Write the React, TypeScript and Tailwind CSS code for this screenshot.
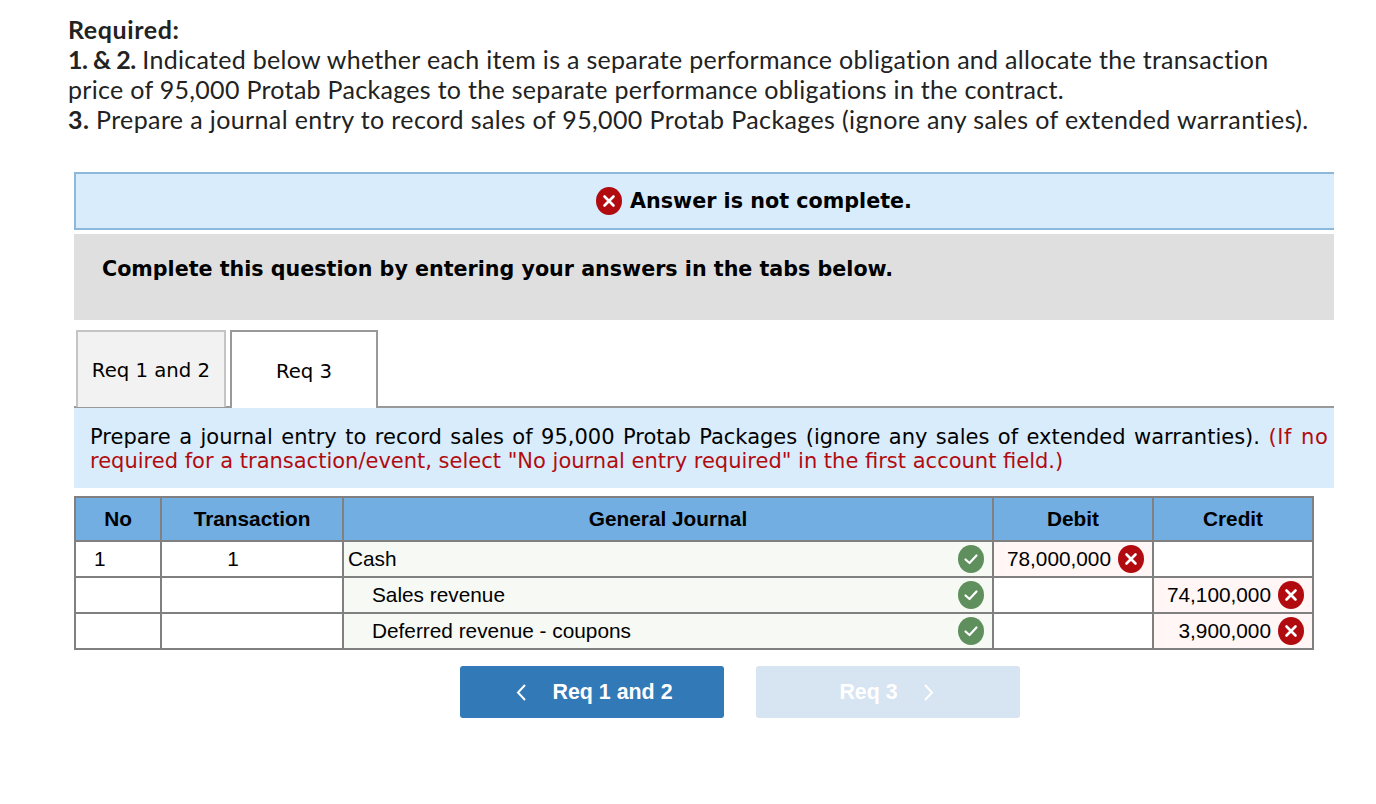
import React from 'react';

const XIcon = () => (
  <svg width="26" height="28" viewBox="0 0 26 28" className="shrink-0">
    <ellipse cx="13" cy="14" rx="13" ry="14" fill="#b10b10" />
    <path d="M8.5 9.5 L17.5 18.5 M17.5 9.5 L8.5 18.5" stroke="#fff" strokeWidth="2.6" strokeLinecap="round" />
  </svg>
);

const CheckIcon = () => (
  <svg width="26" height="28" viewBox="0 0 26 28" className="shrink-0">
    <ellipse cx="13" cy="14" rx="13" ry="14" fill="#5e8f5c" />
    <path d="M7.5 14.5 L11.5 18 L18.5 10.5" fill="none" stroke="#fff" strokeWidth="2.2" strokeLinecap="round" strokeLinejoin="round" />
  </svg>
);

const rows = [
  { no: '1', tx: '1', account: 'Cash', indent: false, debit: '78,000,000', credit: '' },
  { no: '', tx: '', account: 'Sales revenue', indent: true, debit: '', credit: '74,100,000' },
  { no: '', tx: '', account: 'Deferred revenue - coupons', indent: true, debit: '', credit: '3,900,000' },
];

const Amount = ({ value }: { value: string }) =>
  value ? (
    <div className="h-[34px] bg-[#fff6f5] flex items-center justify-end gap-[7px] pr-[8px]">
      <span>{value}</span>
      <XIcon />
    </div>
  ) : null;

export default function App() {
  return (
    <div className="w-[1376px] h-[804px] bg-white overflow-hidden text-black">
      <div className="pt-[14px] pl-[68px] text-[25px] leading-[30px] [font-variant-ligatures:none] text-[#222] font-['Lato',sans-serif]">
        <p className="font-bold tracking-[0.6px]">Required:</p>
        <p className="tracking-[0.3px]">
          <b className="tracking-[-0.5px]">1. &amp; 2.</b> Indicated below whether each item is a separate performance obligation and allocate the transaction
          <br />
          price of 95,000 Protab Packages to the separate performance obligations in the contract.
        </p>
        <p className="tracking-[0.38px]">
          <b>3.</b> Prepare a journal entry to record sales of 95,000 Protab Packages (ignore any sales of extended warranties).
        </p>
      </div>

      <div className="mt-[38px] ml-[74px] w-[1260px] font-['DejaVu_Sans',sans-serif]">
        <div className="h-[58px] bg-[#d9ecfb] border-2 border-r-0 border-[#8cb8dc] flex items-center justify-center gap-[8px] pl-[98px]">
          <XIcon />
          <span className="text-[20.7px] font-bold pt-[1px]">Answer is not complete.</span>
        </div>
        <div className="mt-[4px] h-[86px] bg-[#dfdfdf] pl-[28px] pt-[22px] text-[20.65px] leading-[26px] font-bold">
          Complete this question by entering your answers in the tabs below.
        </div>

        <div className="mt-[10px] h-[78px] border-b-2 border-[#999] flex text-[19.7px]">
          <div className="ml-[2px] w-[150px] h-[77px] bg-[#f2f2f2] border-2 border-b-0 border-[#c4c4c4] flex items-center justify-center pt-[3px]">
            Req 1 and 2
          </div>
          <div className="relative ml-[4px] w-[148px] h-[78px] bg-white border-2 border-b-0 border-[#999] flex items-center justify-center pt-[3px]">
            Req 3
          </div>
        </div>

        <div className="h-[80px] bg-[#d9ecfb] pl-[16px] pt-[17px] text-[21px] leading-[24px] overflow-hidden whitespace-nowrap">
          <p className="[word-spacing:1.8px]">
            Prepare a journal entry to record sales of 95,000 Protab Packages (ignore any sales of extended warranties).{' '}
            <span className="text-[#b10b10] tracking-[0.6px]">(If no</span>
          </p>
          <p className="text-[#b10b10]">required for a transaction/event, select "No journal entry required" in the first account field.)</p>
        </div>

        <table className="mt-[8px] w-[1240px] table-fixed border-collapse border-2 border-[#808080] text-[20.8px] font-['Liberation_Sans',sans-serif]">
          <colgroup>
            <col className="w-[86px]" />
            <col className="w-[182px]" />
            <col className="w-[650px]" />
            <col className="w-[160px]" />
            <col className="w-[160px]" />
          </colgroup>
          <thead>
            <tr className="h-[44px] bg-[#72aee2] font-bold">
              {['No', 'Transaction', 'General Journal', 'Debit', 'Credit'].map((h) => (
                <th key={h} className="border-2 border-[#808080] p-0 text-center font-bold">
                  {h}
                </th>
              ))}
            </tr>
          </thead>
          <tbody>
            {rows.map((r) => (
              <tr key={r.account} className="h-[36px]">
                <td className="border-2 border-[#808080] p-0 pl-[18px]">{r.no}</td>
                <td className="border-2 border-[#808080] p-0 text-center pr-[38px]">{r.tx}</td>
                <td className="border-2 border-[#808080] p-0">
                  <div className={`h-[34px] bg-[#f6f9f4] flex items-center justify-between pr-[8px] ${r.indent ? 'pl-[28px]' : 'pl-[4px]'}`}>
                    <span>{r.account}</span>
                    <CheckIcon />
                  </div>
                </td>
                <td className="border-2 border-[#808080] p-0">
                  <Amount value={r.debit} />
                </td>
                <td className="border-2 border-[#808080] p-0">
                  <Amount value={r.credit} />
                </td>
              </tr>
            ))}
          </tbody>
        </table>
      </div>

      <div className="mt-[16px] ml-[460px] flex gap-[32px] text-[21.4px] font-bold text-white font-['Liberation_Sans',sans-serif]">
        <div className="w-[264px] h-[52px] bg-[#3279b7] rounded-[3px] flex items-center justify-center gap-[26px] pl-[5px]">
          <svg width="10" height="17" viewBox="0 0 10 17" fill="none" stroke="#fff" strokeWidth="2">
            <path d="M9 1 L2 8.5 L9 16" />
          </svg>
          <span>Req 1 and 2</span>
        </div>
        <div className="w-[264px] h-[52px] bg-[#d7e4f1] rounded-[3px] flex items-center justify-center gap-[26px] pr-[3px]">
          <span>Req 3</span>
          <svg width="10" height="17" viewBox="0 0 10 17" fill="none" stroke="#fff" strokeWidth="2">
            <path d="M1 1 L8 8.5 L1 16" />
          </svg>
        </div>
      </div>
    </div>
  );
}
